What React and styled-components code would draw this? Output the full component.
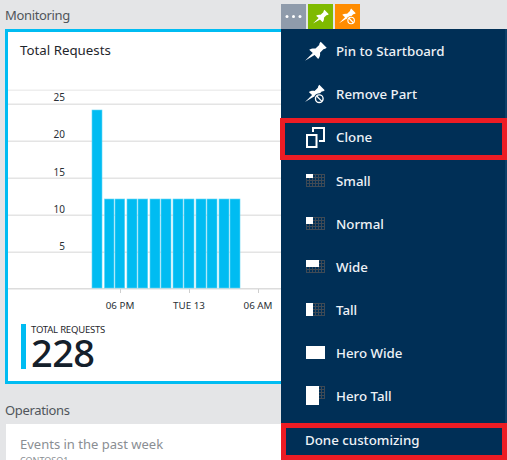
import React from "react";
import styled, { createGlobalStyle } from "styled-components";

const Global = createGlobalStyle`
  html, body { margin: 0; padding: 0; background: #e4e5e7; }
  body { font-family: "Noto Sans", "Open Sans", sans-serif; }
`;

const Page = styled.div`
  width: 507px; height: 460px; overflow: hidden; background: #e4e5e7;
  display: grid; grid-template-columns: 281px 226px; position: relative;
`;
const LeftColumn = styled.div`display: flex; flex-direction: column; padding-left: 5px; min-width: 0;`;
const SectionTitle = styled.div`
  height: ${p => p.$h}px; font-size: 13px; letter-spacing: -0.35px; line-height: 20px; color: #50555b; padding-top: ${p => p.$top}px; box-sizing: border-box;
`;
const Card = styled.section`
  box-sizing: border-box; height: 355px; width: 300px; border: 3px solid #00bcf2; background: #fff;
  display: flex; flex-direction: column;
`;
const CardTitle = styled.h2`
  margin: 0; height: 57px; padding: 8px 0 0 12px; box-sizing: border-box; font-weight: 400; font-size: 13.3px; line-height: 20px; color: #1f262c;
`;
const Chart = styled.svg`display: block; flex: none;`;
const Metric = styled.div`
  display: flex; gap: 5px; margin: 13px 0 0 13px; height: 45px;
`;
const MetricBar = styled.div`width: 5px; height: 45px; background: #00bcf2;`;
const MetricText = styled.div`display: flex; flex-direction: column;`;
const MetricLabel = styled.div`font-size: 9.5px; line-height: 11px; color: #1f262c; letter-spacing: -0.2px;`;
const MetricValue = styled.div`font-size: 38px; font-weight: 500; line-height: 34px; color: #14202b; letter-spacing: -0.6px;`;
const Lower = styled.div`
  background: #fff; margin-left: 1px; height: 36px; width: 280px; padding: 11px 0 0 14px; box-sizing: border-box; overflow: hidden;
`;
const LowerTitle = styled.div`font-size: 13px; line-height: 18px; color: #8a8e93;`;
const LowerSub = styled.div`font-size: 9px; line-height: 12px; margin-top: 2px; color: #8a8e93;`;

const RightColumn = styled.div`display: flex; flex-direction: column; position: relative; z-index: 1; min-width: 0;`;
const Toolbar = styled.div`display: flex; gap: 2px; padding-top: 4px; height: 29px; box-sizing: border-box;`;
const ToolButton = styled.div`
  width: 25px; height: 25px; background: ${p => p.$bg}; display: flex; align-items: center; justify-content: center;
`;
const Menu = styled.nav`
  flex: 1; background: #002f56; border-right: 2px solid #0d3f68; box-sizing: border-box; display: flex; flex-direction: column; width: 226px; position: relative;
`;
const Item = styled.div`
  height: ${p => p.$h || 43}px; flex: none; display: flex; align-items: center; box-sizing: border-box; padding-left: 24px; gap: 11px;
  color: #eef2f6; font-size: 13.3px; font-weight: 500;
`;
const CloneItem = styled(Item)`
  border: 5px solid #ed1c24; width: 227px; margin-left: -1px; padding-left: 20px; padding-bottom: 4px; height: 42px; margin-top: 3px; margin-bottom: -1px;
`;
const DoneItem = styled(Item)`
  position: absolute; left: 0; bottom: 0; width: 226px; height: 37px; border: 5px solid #ed1c24; padding-left: 19px; padding-bottom: 3px;
`;
const IconBox = styled.span`width: 20px; height: 24px; display: flex; align-items: center; justify-content: flex-start; flex: none;`;

const bars = [[92,10,110],[104.5,9.5,199],[115,9.7,199],[127,10,199],[138,9.7,199],[150,10,199],[161,10,199],[173,10,199],[184,10,199],[196,10,199],[207,10,199],[219,10,199],[230,10,199]];
const OFFSET_X = 8, OFFSET_Y = 89;
const yLabels = [[25,97],[20,134],[15,172],[10,209],[5,246]];
const grid = [[90,"#eeeeee"],[104,"#e4e4e4"],[141,"#e4e4e4"],[178,"#e4e4e4"],[215,"#e4e4e4"],[252,"#e4e4e4"],[288.5,"#dcdcdc"]];
const xLabels = [[120,"06 PM"],[189,"TUE 13"],[258,"06 AM"]];

const ChartDrawing = () => (
  <Chart width="273" height="222" viewBox={`${OFFSET_X} ${OFFSET_Y} 273 222`}>
    {grid.map(([y,c]) => <rect key={y} x="8" y={y-0.5} width="273" height="1.5" fill={c} />)}
    {bars.map(([x,w,y]) => <rect key={x} x={x} y={y} width={w} height={288-y} fill="#00bcf2" stroke="#63d5f6" strokeWidth=".6" />)}
    {yLabels.map(([v,y]) => <text key={v} x="65" y={y+4} textAnchor="end" fontSize="10" fill="#2a3036" fontFamily="Noto Sans">{v}</text>)}
    {xLabels.map(([x,t]) => (
      <g key={t}>
        <rect x={x} y="289" width="1" height="4" fill="#cfcfcf" />
        <text x={x} y="309" textAnchor="middle" fontSize="9.8" fill="#2a3036" fontFamily="Noto Sans">{t}</text>
      </g>
    ))}
  </Chart>
);

const PinPath = "M0 19.7 L7.8 12 L4.2 8.8 C6 7.6 8.5 7.2 10.5 7.6 L14.2 4 C14.2 3 14.8 1.8 15.7 .8 L21.7 6.8 C20.7 7.7 19.6 8.2 18.4 8.2 L15 11.8 C15.4 14 14.8 16.2 13.2 18 L9.6 14 Z";
const Pin = ({ w = 22, h = 20 }) => (
  <svg width={w} height={h} viewBox="0 0 22 20" style={{ overflow: "visible" }}><path d={PinPath} fill="#fff" /></svg>
);
const PinOff = ({ w = 22, h = 22, bg }) => (
  <svg width={w} height={h} viewBox="0 0 22 22">
    <path d={PinPath} fill="#fff" />
    <circle cx="15.7" cy="16.2" r="6" fill={bg} />
    <circle cx="15.7" cy="16.2" r="4.2" fill="none" stroke="#fff" strokeWidth="1.5" />
    <path d="M12.8 13.3 L18.6 19.1" stroke="#fff" strokeWidth="1.5" />
  </svg>
);
const CloneIcon = () => (
  <svg width="19" height="21" viewBox="0 0 19 21" fill="none" stroke="#fff" strokeWidth="2">
    <path d="M7 5 V1 H18 V14 H13" />
    <rect x="1" y="8" width="9.5" height="12" />
  </svg>
);
const SizeIcon = ({ w, h }) => {
  const lines = [];
  for (let x = 0.5; x <= 19; x += 3) lines.push(<path key={"v"+x} d={`M${x} 0 V13`} />);
  for (let y = 0.5; y <= 13; y += 3) lines.push(<path key={"h"+y} d={`M0 ${y} H19`} />);
  return (
    <svg width="19" height={Math.max(13, h)} viewBox={`0 0 19 ${Math.max(13, h)}`}>
      <g stroke="#3f4a55" strokeWidth="1" fill="none">{lines}</g>
      <rect x="0" y="0" width={w} height={h} fill="#fff" />
    </svg>
  );
};

const SizeOffset = styled.span`display: flex; padding-left: 1px;`;

const sizes = [
  ["Small", 7, 4],
  ["Normal", 7, 7],
  ["Wide", 13, 7],
  ["Tall", 7, 13],
  ["Hero Wide", 19, 13],
  ["Hero Tall", 13, 19],
];

export default function App() {
  return (
    <Page>
      <Global />
      <LeftColumn>
        <SectionTitle $h={29} $top={5}>Monitoring</SectionTitle>
        <Card>
          <CardTitle>Total Requests</CardTitle>
          <ChartDrawing />
          <Metric>
            <MetricBar />
            <MetricText>
              <MetricLabel>TOTAL REQUESTS</MetricLabel>
              <MetricValue>228</MetricValue>
            </MetricText>
          </Metric>
        </Card>
        <SectionTitle $h={40} $top={16}>Operations</SectionTitle>
        <Lower>
          <LowerTitle>Events in the past week</LowerTitle>
          <LowerSub>CONTOSO1</LowerSub>
        </Lower>
      </LeftColumn>
      <RightColumn>
        <Toolbar>
          <ToolButton $bg="#8f9bab">
            <svg width="19" height="5" viewBox="0 0 19 5" fill="#fff"><circle cx="3" cy="2.5" r="1.5"/><circle cx="9.5" cy="2.5" r="1.5"/><circle cx="16" cy="2.5" r="1.5"/></svg>
          </ToolButton>
          <ToolButton $bg="#7fba00"><Pin w={16} h={15} /></ToolButton>
          <ToolButton $bg="#ff8c00"><PinOff w={17} h={17} bg="#ff8c00" /></ToolButton>
        </Toolbar>
        <Menu>
          <Item $h={44}><IconBox><Pin /></IconBox>Pin to Startboard</Item>
          <Item $h={42}><IconBox><PinOff bg="#002f56" /></IconBox>Remove Part</Item>
          <CloneItem><IconBox><SizeOffset><CloneIcon /></SizeOffset></IconBox>Clone</CloneItem>
          {sizes.map(([label, w, h]) => (
            <Item key={label}><IconBox><SizeOffset><SizeIcon w={w} h={h} /></SizeOffset></IconBox>{label}</Item>
          ))}
          <DoneItem>Done customizing</DoneItem>
        </Menu>
      </RightColumn>
    </Page>
  );
}
